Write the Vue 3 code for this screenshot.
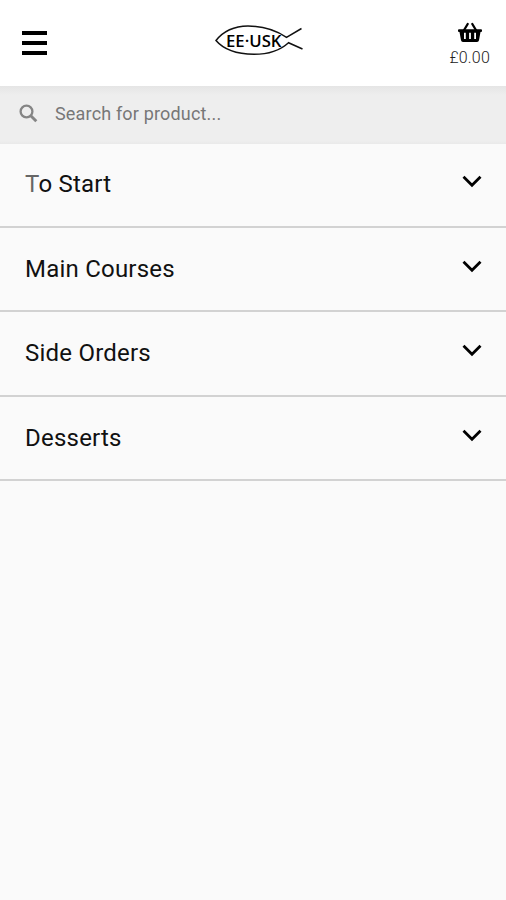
<script setup>
import { ref } from 'vue'

const categories = ['To Start', 'Main Courses', 'Side Orders', 'Desserts']
const query = ref('')
</script>

<template>
  <div class="page">
    <header class="header">
      <button class="menu" aria-label="Menu">
        <span></span><span></span><span></span>
      </button>
      <svg class="logo" width="90" height="36" viewBox="0 0 90 36">
        <g fill="none" stroke="#111" stroke-width="1.5">
          <path d="M87.500 6.500 L72.500 15.300 C61 7.500 48 4 34 4 C20 4.200 9 9.500 2 18.500 C10 28 22 32 40 32.300 C55 32.300 66 28.500 74.500 20.700 L88.500 27" />
        </g>
        <text x="12" y="24.500" textLength="55.500" lengthAdjust="spacingAndGlyphs">EE·USK</text>
      </svg>
      <button class="basket" aria-label="Basket">
        <svg width="24" height="21" viewBox="0 0 24 21">
          <path d="M5.800 8.500 L9.700 2 M18.200 8.500 L14.300 2" fill="none" stroke="#000" stroke-width="2.300" stroke-linecap="round" />
          <path fill="#000" fill-rule="evenodd" d="M1 7.200 H23 Q24 7.200 24 8.200 V9 Q24 10 23 10 H22.500 L21 18.200 Q20.700 20 19 20 H5 Q3.300 20 3 18.200 L1.500 10 H1 Q0 10 0 9 V8.200 Q0 7.200 1 7.200 Z M6 10.800 V17 H7.800 V10.800 Z M11.100 10.800 V17 H12.900 V10.800 Z M16.200 10.800 V17 H18 V10.800 Z" />
        </svg>
        <span class="total">£0.00</span>
      </button>
    </header>

    <label class="search">
      <svg width="19" height="19" viewBox="0 0 19 19" fill="none" stroke="#858585">
        <circle cx="7.500" cy="7.500" r="5.900" stroke-width="2.300" />
        <path d="M11.800 11.800 L17.300 17.300" stroke-width="2.900" />
      </svg>
      <input v-model="query" type="text" placeholder="Search for product..." />
    </label>

    <ul class="categories">
      <li v-for="name in categories" :key="name">
        <span>{{ name }}</span>
        <svg width="20" height="13" viewBox="0 0 20 13">
          <path d="M1.500 1.800 L10 10.300 L18.500 1.800" fill="none" stroke="#000" stroke-width="2.800" />
        </svg>
      </li>
    </ul>
  </div>
</template>

<style>
body {
  background: #fafafa;
}
</style>

<style scoped>
.page {
  min-height: 100vh;
  background: #fafafa;
  font-family: Roboto, "Liberation Sans", sans-serif;
  color: #111;
}
.header {
  box-sizing: border-box;
  height: 86px;
  padding: 0 16px 0 22px;
  display: grid;
  grid-template-columns: 1fr 90px 1fr;
  align-items: start;
  background: #fff;
}
button {
  padding: 0;
  border: 0;
  background: none;
  font: inherit;
  color: inherit;
}
.menu {
  width: 25px;
  margin-top: 31px;
  display: flex;
  flex-direction: column;
  gap: 6px;
}
.menu span {
  height: 4px;
  background: #000;
}
.logo {
  margin: 22px 0 0 3px;
}
.logo text {
  font: 600 16.500px "Open Sans", sans-serif;
  fill: #000;
}
.basket {
  justify-self: end;
  margin-top: 22px;
  display: flex;
  flex-direction: column;
  align-items: center;
}
.total {
  margin-top: 5px;
  font-size: 16px;
  font-weight: 300;
  line-height: 20px;
  letter-spacing: 0.200px;
  color: #222;
}
.search {
  box-sizing: border-box;
  height: 58px;
  padding: 0 19px 3px;
  display: flex;
  align-items: center;
  gap: 17px;
  background: linear-gradient(#e5e5e5, #eaeaea 5px, #eee 9px, #eee 55px, #e9e9e9);
}
.search input {
  flex: 1;
  min-width: 0;
  padding: 0;
  border: 0;
  outline: 0;
  background: none;
  font: 18px Roboto, sans-serif;
  letter-spacing: 0.170px;
}
.search input::placeholder {
  color: #777;
  opacity: 1;
}
.categories {
  list-style: none;
  margin: 0;
  padding: 0;
}
.categories li {
  box-sizing: border-box;
  height: 84.300px;
  padding: 0 24px 0 25px;
  display: flex;
  align-items: center;
  justify-content: space-between;
  border-bottom: 2px solid #d2d2d2;
  font-size: 24px;
  letter-spacing: 0.220px;
}
.categories li:first-child {
  height: 84px;
  padding-bottom: 2px;
}
.categories li:first-child span::first-letter {
  color: #666;
}
.categories svg {
  margin-bottom: 5px;
}
</style>
